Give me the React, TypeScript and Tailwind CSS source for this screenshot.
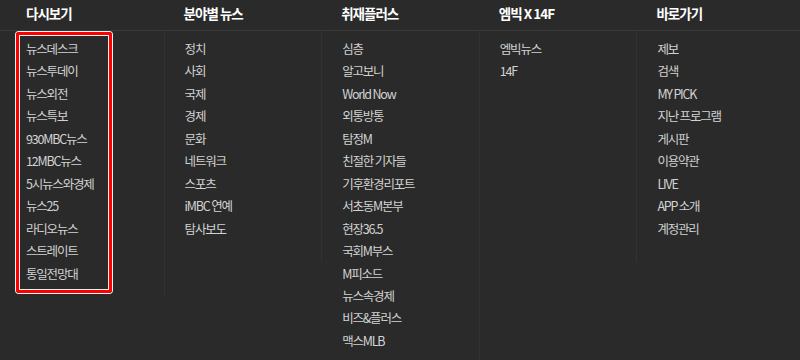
const columns: { title: string; items: string[]; line: string }[] = [
  {
    title: '다시보기',
    items: ['뉴스데스크', '뉴스투데이', '뉴스외전', '뉴스특보', '930MBC뉴스', '12MBC뉴스', '5시뉴스와경제', '뉴스25', '라디오뉴스', '스트레이트', '통일전망대'],
    line: '',
  },
  {
    title: '분야별 뉴스',
    items: ['정치', '사회', '국제', '경제', '문화', '네트워크', '스포츠', 'iMBC 연예', '탐사보도'],
    line: 'border-l border-[#323232] h-[266px]',
  },
  {
    title: '취재플러스',
    items: ['심층', '알고보니', 'World Now', '외통방통', '탐정M', '친절한 기자들', '기후환경리포트', '서초동M본부', '현장36.5', '국회M부스', 'M피소드', '뉴스속경제', '비즈&플러스', '맥스MLB'],
    line: 'border-l border-[#323232] h-[231px]',
  },
  {
    title: '엠빅 X 14F',
    items: ['엠빅뉴스', '14F'],
    line: 'border-l border-[#323232] h-[329px]',
  },
  {
    title: '바로가기',
    items: ['제보', '검색', 'MY PICK', '지난 프로그램', '게시판', '이용약관', 'LIVE', 'APP 소개', '계정관리'],
    line: 'border-l border-[#323232] h-[231px]',
  },
];

export default function App() {
  return (
    <div
      className="relative w-[800px] h-[360px] overflow-hidden bg-[#2a2a2a] text-white"
      style={{ fontFamily: '"Noto Sans CJK KR", "Noto Sans", sans-serif' }}
    >
      {/* Headings */}
      <div className="grid grid-cols-5 h-[31px] px-[6px] border-b border-[#383838]">
        {columns.map((col) => (
          <h3 key={col.title} className="pl-5 text-[13.5px] font-bold leading-[26px] tracking-[-1px]">
            {col.title}
          </h3>
        ))}
      </div>

      {/* Link lists */}
      <div className="grid grid-cols-5 items-start px-[6px]">
        {columns.map((col) => (
          <ul key={col.title} className={`pl-5 pt-[7px] ${col.line}`}>
            {col.items.map((item) => (
              <li key={item} className="text-[12.5px] leading-[22.45px] text-[#d2d2d2] tracking-[-1.2px] whitespace-nowrap">
                {item}
              </li>
            ))}
          </ul>
        ))}
      </div>

      {/* highlight box */}
      <div className="absolute left-[16px] top-[32px] w-[96px] h-[261px] rounded-[3px] border-[3px] border-[#ff0000] shadow-[0_0_0_1px_#f4f4f4,inset_0_0_0_1px_#f4f4f4]" />
    </div>
  );
}
